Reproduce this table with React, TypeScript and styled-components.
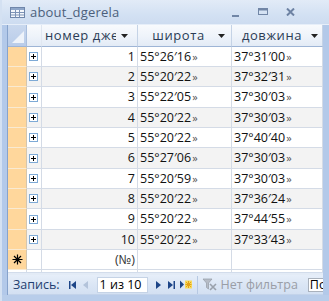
import React from "react";
import styled, {createGlobalStyle} from "styled-components";

const Global = createGlobalStyle`
    html, body {
        margin: 0;
        padding: 0;
        background: #bfd3ee;
    }
    * {
        box-sizing: border-box;
    }
`

const Window = styled.div`
    width: 329px;
    height: 301px;
    display: flex;
    flex-direction: column;
    background: #b3c9e9;
    border-left: 2px solid #d4e1f2;
    overflow: hidden;
    font-family: "Open Sans", "Liberation Sans", sans-serif;
`

const TitleBar = styled.div`
    height: 25px;
    display: flex;
    align-items: center;
    padding-left: 10px;
    margin-left: -2px;
    background: linear-gradient(to bottom, #e2ebf7 0%, #d3e1f3 60%, #cddcf0 100%);
    border-bottom: 1px solid #e6eef9;
`

const Title = styled.div`
    flex: 1;
    margin-left: 5px;
    font-size: 13px;
    color: #4c5f7c;
    letter-spacing: 0.2px;
`

const Controls = styled.div`
    display: flex;
    align-items: center;
    padding-right: 28px;
`

const Ctl = styled.div<{w: number}>`
    width: ${p => p.w}px;
    height: 14px;
    display: flex;
    align-items: center;
    justify-content: center;
`

const Body = styled.div`
    flex: 1;
    display: flex;
    flex-direction: column;
    margin-left: 5px;
    margin-right: 6px;
    border-left: 1px solid #87a3cc;
    background: #ffffff;
    min-height: 0;
`

const Row = styled.div<{h: number}>`
    display: grid;
    grid-template-columns: 19px 15px 96px 94px 91px;
    height: ${p => p.h}px;
    flex: none;
`

const Filler = styled(Row)`
    flex: 1;
    height: auto;
`

const HeadCorner = styled.div`
    background: linear-gradient(to bottom, #c9d8ee, #b9cce9);
    border-right: 1px solid #a9bedd;
    border-bottom: 1px solid #9eb5d6;
    position: relative;
`

const HeadCell = styled.div<{pr: number}>`
    background: linear-gradient(to bottom, #f8fafd 0%, #eef3fa 55%, #e3ebf6 100%);
    border-right: 1px solid #c5d3e6;
    border-bottom: 1px solid #9eb5d6;
    display: flex;
    align-items: center;
    padding: 0 ${p => p.pr}px 0 3px;
    font-size: 13px;
    letter-spacing: 0.6px;
    color: #2b3c55;
    overflow: hidden;
    white-space: nowrap;
`

const HeadText = styled.span<{clip?: boolean}>`
    flex: 1;
    overflow: hidden;
    text-align: ${p => (p.clip ? "left" : "center")};
    margin-right: ${p => (p.clip ? 5 : 2)}px;
    white-space: nowrap;
    padding-bottom: 1px;
`

const Selector = styled.div`
    background: #ffd79c;
    border-right: 1px solid #d3c6b0;
    border-bottom: 1px solid #f9ead2;
    display: flex;
    align-items: center;
    justify-content: center;
`

const ExpandCell = styled.div<{alt?: boolean}>`
    background: ${p => (p.alt ? "#f3f3f3" : "#ffffff")};
    border-right: 1px solid #d4dbe6;
    border-bottom: 1px solid #d4dbe6;
    display: flex;
    align-items: center;
    justify-content: center;
`

const PlusBox = styled.div`
    width: 9px;
    height: 9px;
    border: 1px solid #7eaad6;
    background: #ffffff;
    position: relative;
    margin-right: 1px;
    &::before {
        content: "";
        position: absolute;
        left: 1px;
        top: 3px;
        width: 5px;
        height: 1px;
        background: #000;
    }
    &::after {
        content: "";
        position: absolute;
        left: 3px;
        top: 1px;
        width: 1px;
        height: 5px;
        background: #000;
    }
`

const Cell = styled.div<{alt?: boolean; right?: boolean}>`
    background: ${p => (p.alt ? "#f3f3f3" : "#ffffff")};
    border-right: 1px solid #d4dbe6;
    border-bottom: 1px solid #d4dbe6;
    display: flex;
    align-items: center;
    justify-content: ${p => (p.right ? "flex-end" : "flex-start")};
    padding: 0 2px 1px 2px;
    font-size: 12.5px;
    color: #111;
    white-space: nowrap;
    overflow: hidden;
`

const NewCell = styled(Cell)`
    color: #333;
`

const Quote = styled.span`
    color: #555;
    font-size: 11px;
    margin-left: 1px;
`

const FillCell = styled.div`
    border-right: 1px solid #d4dbe6;
`

const Band = styled.div`
    height: 3px;
    background: #e3ebf6;
    border-top: 1px solid #d2dceb;
    flex: none;
`

const NavBar = styled.div`
    height: 20px;
    flex: none;
    display: flex;
    align-items: center;
    background: linear-gradient(to bottom, #e6eef9 0%, #dbe6f5 50%, #d3e0f2 100%);
    border-bottom: 1px solid #c3d3ea;
    font-size: 12.5px;
    white-space: nowrap;
    overflow: hidden;
`

const NavLabel = styled.span`
    color: #1f3e70;
    margin-left: 5px;
    margin-right: 7px;
`

const NavBtn = styled.div<{w: number}>`
    width: ${p => p.w}px;
    height: 16px;
    display: flex;
    align-items: center;
    justify-content: center;
    flex: none;
`

const Counter = styled.div`
    width: 51px;
    height: 16px;
    flex: none;
    background: #ffffff;
    border: 1px solid #c5d3e6;
    color: #000;
    padding-left: 2px;
    line-height: 14px;
    margin: 0 6px 0 4px;
`

const Sep = styled.div`
    width: 1px;
    height: 18px;
    background: #b7c9e3;
    margin: 0 3px 0 4px;
    flex: none;
`

const FilterText = styled.span`
    color: #9a9ea6;
    margin-left: 2px;
`

const Search = styled.div`
    margin-left: 10px;
    height: 14px;
    width: 20px;
    flex: none;
    background: #ffffff;
    border: 1px solid #a9b1bc;
    border-right: none;
    color: #000;
    line-height: 12px;
    padding-left: 1px;
    overflow: hidden;
`

const BottomFrame = styled.div`
    height: 6px;
    flex: none;
    background: #b8cdea;
`

const Arrow = () => (
    <svg width="7" height="4" viewBox="0 0 7 4" style={{flex: "none"}}><polygon points="0,0 7,0 3.5,4" fill="#222"/></svg>
)

const rows = [
    ["1", "55°26′16", "37°31′00"],
    ["2", "55°20′22", "37°32′31"],
    ["3", "55°22′05", "37°30′03"],
    ["4", "55°20′22", "37°30′03"],
    ["5", "55°20′22", "37°40′40"],
    ["6", "55°27′06", "37°30′03"],
    ["7", "55°20′59", "37°30′03"],
    ["8", "55°20′22", "37°36′24"],
    ["9", "55°20′22", "37°44′55"],
    ["10", "55°20′22", "37°33′43"],
]

// rows are a little over 20px in the picture
const rowH = (i: number) => (i % 3 === 2 ? 21 : 20)

export default function App() {
    return (
        <>
            <Global/>
            <Window>
                <TitleBar>
                    <svg width="15" height="11" viewBox="0 0 15 11">
                        <rect x="0.5" y="0.5" width="14" height="10" fill="#f4f7fb" stroke="#6f86aa"/>
                        <rect x="1" y="1" width="13" height="2" fill="#8ea6c9"/>
                        <path d="M1 5.5H14M1 8H14M5.5 3V10.5M9.5 3V10.5" stroke="#7d93b6" strokeWidth="1"/>
                    </svg>
                    <Title>about_dgerela</Title>
                    <Controls>
                        <Ctl w={22}>
                            <svg width="8" height="14" viewBox="0 0 8 14"><rect x="0" y="10" width="7" height="2" fill="#7186a6"/></svg>
                        </Ctl>
                        <Ctl w={32}>
                            <svg width="10" height="8" viewBox="0 0 10 8"><rect x="0.5" y="0.5" width="9" height="6" fill="none" stroke="#7186a6"/><rect x="1" y="1" width="8" height="1.5" fill="#7186a6"/></svg>
                        </Ctl>
                        <Ctl w={22}>
                            <svg width="9" height="8" viewBox="0 0 9 8"><path d="M1 0.5L8 7.5M8 0.5L1 7.5" stroke="#6d82a3" strokeWidth="2"/></svg>
                        </Ctl>
                    </Controls>
                </TitleBar>
                <Body>
                    <Row h={22}>
                        <HeadCorner>
                            <svg width="12" height="12" viewBox="0 0 12 12" style={{position: "absolute", right: 2, bottom: 3}}>
                                <polygon points="12,0 12,12 0,12" fill="#eef3fa"/>
                            </svg>
                        </HeadCorner>
                        <HeadCell pr={0} style={{borderRight: "1px solid #e0e7f1"}}/>
                        <HeadCell pr={9}>
                            <HeadText clip>номер джерела</HeadText>
                            <Arrow/>
                        </HeadCell>
                        <HeadCell pr={6}>
                            <HeadText>широта</HeadText>
                            <Arrow/>
                        </HeadCell>
                        <HeadCell pr={4}>
                            <HeadText>довжина</HeadText>
                            <Arrow/>
                        </HeadCell>
                    </Row>
                    {rows.map((r, i) => (
                        <Row h={rowH(i)} key={r[0]}>
                            <Selector/>
                            <ExpandCell alt={i % 2 === 1}><PlusBox/></ExpandCell>
                            <Cell alt={i % 2 === 1} right>{r[0]}</Cell>
                            <Cell alt={i % 2 === 1}>{r[1]}<Quote>»</Quote></Cell>
                            <Cell alt={i % 2 === 1}>{r[2]}<Quote>»</Quote></Cell>
                        </Row>
                    ))}
                    <Row h={20}>
                        <Selector>
                            <svg width="11" height="11" viewBox="0 0 11 11">
                                <path d="M5.5 0.5V10.5M0.5 5.5H10.5M2 2L9 9M9 2L2 9" stroke="#000" strokeWidth="1.2"/>
                            </svg>
                        </Selector>
                        <ExpandCell/>
                        <NewCell right>(№)</NewCell>
                        <Cell/>
                        <Cell/>
                    </Row>
                    <Filler h={0}>
                        <FillCell/>
                        <FillCell/>
                        <FillCell/>
                        <FillCell/>
                        <FillCell/>
                    </Filler>
                    <Band/>
                    <NavBar>
                        <NavLabel>Запись:</NavLabel>
                        <NavBtn w={12}>
                            <svg width="7" height="8" viewBox="0 0 7 8"><rect x="0" y="0" width="1.5" height="8" fill="#1d4587"/><polygon points="7,0 7,8 2,4" fill="#1d4587"/></svg>
                        </NavBtn>
                        <NavBtn w={14}>
                            <svg width="5" height="8" viewBox="0 0 5 8"><polygon points="5,0 5,8 0,4" fill="#b3c3da"/></svg>
                        </NavBtn>
                        <Counter>1 из 10</Counter>
                        <NavBtn w={10}>
                            <svg width="5" height="8" viewBox="0 0 5 8"><polygon points="0,0 0,8 5,4" fill="#1d4587"/></svg>
                        </NavBtn>
                        <NavBtn w={15}>
                            <svg width="7" height="8" viewBox="0 0 7 8"><polygon points="0,0 0,8 5,4" fill="#1d4587"/><rect x="5.5" y="0" width="1.5" height="8" fill="#1d4587"/></svg>
                        </NavBtn>
                        <NavBtn w={14}>
                            <svg width="12" height="9" viewBox="0 0 12 9">
                                <polygon points="0,0.5 0,8.5 4,4.5" fill="#1d4587"/>
                                <rect x="5" y="0.5" width="7" height="8" fill="#f7d95a"/>
                                <path d="M8.5 1V8M5.5 4.5H11.5M6 2L11 7M11 2L6 7" stroke="#e3a21a" strokeWidth="1"/>
                            </svg>
                        </NavBtn>
                        <Sep/>
                        <NavBtn w={18}>
                            <svg width="16" height="13" viewBox="0 0 16 13">
                                <path d="M1 1H10L6.5 5V11L4.5 9.5V5Z" fill="#b6bcc6" stroke="#9aa1ab" strokeWidth="0.8"/>
                                <path d="M8 6L14 12M14 6L8 12" stroke="#9aa1ab" strokeWidth="1.6"/>
                            </svg>
                        </NavBtn>
                        <FilterText>Нет фильтра</FilterText>
                        <Search>По</Search>
                    </NavBar>
                </Body>
                <BottomFrame/>
            </Window>
        </>
    )
}
